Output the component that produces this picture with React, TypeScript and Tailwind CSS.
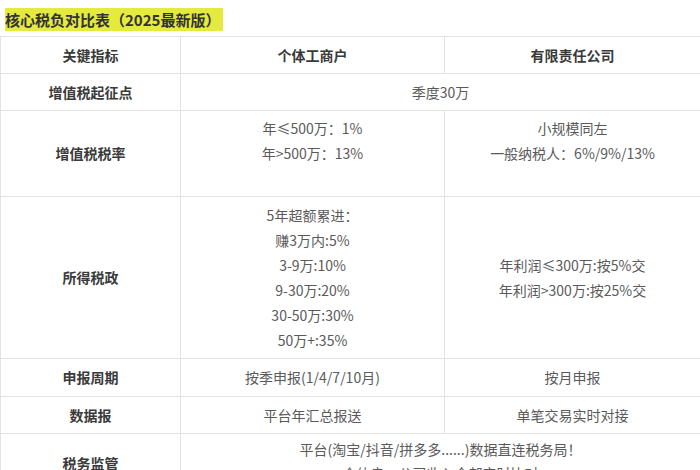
import React from 'react';

const cell = 'flex flex-col items-center justify-center border-b border-r border-[#e3e3e3] text-center';
const label = `${cell} font-bold text-[#3a3a3a]`;
const body = `${cell} text-[#5a5a5a] leading-[25px]`;

export default function App() {
  return (
    <div
      className="w-[700px] h-[470px] overflow-hidden bg-white text-[14px]"
      style={{ fontFamily: '"Noto Sans CJK SC", "Noto Sans", sans-serif' }}
    >
      <div className="h-[36px] pt-[8px] pl-[5px]">
        <div className="inline-flex h-[23px] items-center bg-[#e5ea3e] pr-[3px] text-[15px] font-bold text-[#333] leading-none">
          核心税负对比表（2025最新版）
        </div>
      </div>

      <div className="grid grid-cols-[180px_264px_256px] grid-rows-[37px_37px_86px_162px_38px_37px_60px] border-t border-l border-[#e3e3e3]">
        <div className={label}>关键指标</div>
        <div className={`${cell} font-bold text-[#3a3a3a]`}>个体工商户</div>
        <div className={`${cell} font-bold text-[#3a3a3a]`}>有限责任公司</div>

        <div className={label}>增值税起征点</div>
        <div className={`${body} col-span-2`}>季度30万</div>

        <div className={label}>增值税税率</div>
        <div className={`${body} !justify-start pt-[5px]`}>
          <div>年≤500万：1%</div>
          <div>年&gt;500万：13%</div>
        </div>
        <div className={`${body} !justify-start pt-[5px]`}>
          <div>小规模同左</div>
          <div>一般纳税人：6%/9%/13%</div>
        </div>

        <div className={label}>所得税政</div>
        <div className={body}>
          <div>5年超额累进：</div>
          <div>赚3万内:5%</div>
          <div>3-9万:10%</div>
          <div>9-30万:20%</div>
          <div>30-50万:30%</div>
          <div>50万+:35%</div>
        </div>
        <div className={body}>
          <div>年利润≤300万:按5%交</div>
          <div>年利润&gt;300万:按25%交</div>
        </div>

        <div className={label}>申报周期</div>
        <div className={body}>按季申报(1/4/7/10月)</div>
        <div className={body}>按月申报</div>

        <div className={label}>数据报</div>
        <div className={body}>平台年汇总报送</div>
        <div className={body}>单笔交易实时对接</div>

        <div className={label}>税务监管</div>
        <div className={`${body} col-span-2 !justify-start pt-[3px] !leading-[24px]`}>
          <div>平台(淘宝/抖音/拼多多......)数据直连税务局！</div>
          <div>个体户、公司收入全部实时比对</div>
        </div>
      </div>
    </div>
  );
}
